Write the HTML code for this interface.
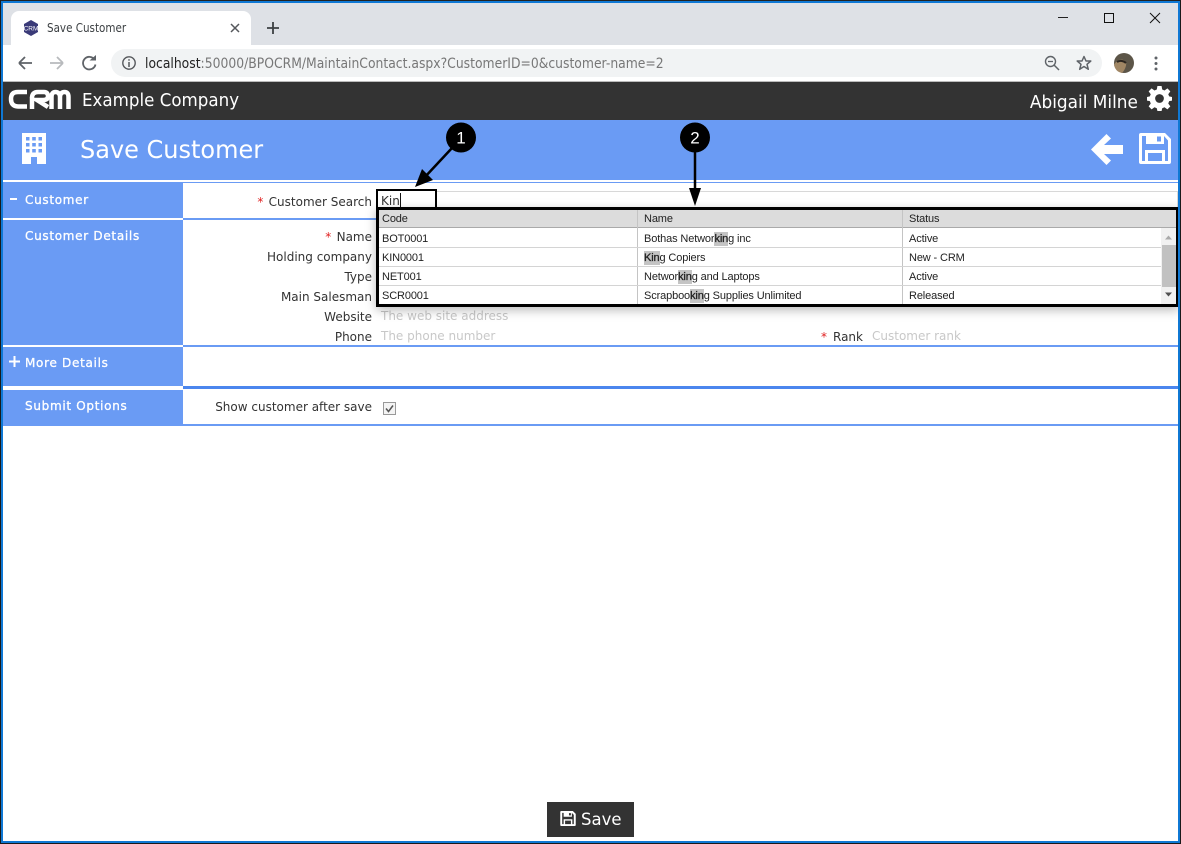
<!DOCTYPE html>
<html><head><meta charset="utf-8"><style>
html,body{margin:0;padding:0;background:#fff}
body{position:relative;width:1181px;height:844px;overflow:hidden;font-family:"DejaVu Sans",sans-serif;color:#333}
.a{position:absolute;white-space:nowrap}
.l{position:absolute;right:809px;font-size:12px;line-height:16px;white-space:nowrap;color:#333}
.s{color:#e02020;margin-right:1.5px}
.sec{position:absolute;left:25px;font-size:12px;font-weight:400;line-height:16px;color:#fff;white-space:nowrap;-webkit-text-stroke:.3px #fff;letter-spacing:.7px}
.ph{position:absolute;font-size:12px;line-height:16px;color:#c8c8c8;white-space:nowrap}
.c{position:absolute;font:11px/14px "Liberation Sans",sans-serif;color:#222;white-space:nowrap;letter-spacing:-.13px;margin-top:1px}
mark{background:#c4c4c4;color:#222;padding:1px 0;-webkit-text-stroke:.3px #222}
.rl{position:absolute;left:379px;width:782px;height:1px;background:#d4d4d4}
</style></head><body>
<!-- chrome -->
<div class="a" style="left:0;top:0;width:1181px;height:45px;background:#dee1e6"></div>
<div class="a" style="left:11px;top:11px;width:240px;height:34px;background:#fff;border-radius:8px 8px 0 0"></div>
<svg class="a" style="left:23px;top:20px" width="16" height="16" viewBox="0 0 16 16"><path d="M8 0L15 4V12L8 16L1 12V4Z" fill="#3a3a78"/><text x="8" y="10.500" font-size="6.500" font-family="Liberation Sans" fill="#fff" text-anchor="middle">CRM</text></svg>
<div class="a" style="left:47px;top:20px;font:12px/16px 'DejaVu Sans',sans-serif;color:#3c4043;transform-origin:0 50%;transform:scaleX(.864)">Save Customer</div>
<svg class="a" style="left:230px;top:23px" width="10" height="10" viewBox="0 0 10 10"><path d="M1 1L9 9M9 1L1 9" stroke="#55585c" stroke-width="1.500"/></svg>
<svg class="a" style="left:266px;top:21px" width="14" height="14" viewBox="0 0 14 14"><path d="M7 1V13M1 7H13" stroke="#3c4043" stroke-width="1.800"/></svg>
<svg class="a" style="left:1057px;top:12px" width="110" height="12" viewBox="0 0 110 12"><path d="M1 5.500H11" stroke="#222"/><rect x="47.500" y="1.500" width="9" height="9" fill="none" stroke="#111"/><path d="M93 1L103 11M103 1L93 11" stroke="#111"/></svg>
<div class="a" style="left:0;top:45px;width:1181px;height:36px;background:#fff"></div>
<svg class="a" style="left:17px;top:54px" width="90" height="18" viewBox="0 0 90 18" fill="none"><path d="M2 9H15M2 9L8 3M2 9L8 15" stroke="#5f6368" stroke-width="1.800"/><path d="M33 9H46M46 9L40 3M46 9L40 15" stroke="#b8babd" stroke-width="1.800"/><path d="M77.500 5.500A6.300 6.300 0 1 0 78.500 10.500" stroke="#5f6368" stroke-width="1.800"/><path d="M72.500 6.500H79V1Z" fill="#5f6368"/></svg>
<div class="a" style="left:111px;top:49px;width:991px;height:28px;border-radius:14px;background:#f1f3f4"></div>
<svg class="a" style="left:121px;top:55px" width="16" height="16" viewBox="0 0 16 16" fill="none"><circle cx="8" cy="8" r="6.200" stroke="#55585c" stroke-width="1.400"/><path d="M8 7V12" stroke="#55585c" stroke-width="1.500"/><path d="M8 4.200V5.700" stroke="#55585c" stroke-width="1.500"/></svg>
<div class="a" style="left:145px;top:56px;font:14px/17px 'DejaVu Sans',sans-serif;color:#777;transform-origin:0 50%;transform:scaleX(.884)"><span style="color:#222">localhost</span>:50000/BPOCRM/MaintainContact.aspx?CustomerID=0&amp;customer-name=2</div>
<svg class="a" style="left:1044px;top:55px" width="16" height="16" viewBox="0 0 16 16" fill="none"><circle cx="6.500" cy="6.500" r="5" stroke="#5f6368" stroke-width="1.400"/><path d="M10 10L15 15" stroke="#5f6368" stroke-width="1.500"/><path d="M4 6.500H9" stroke="#5f6368" stroke-width="1.300"/></svg>
<svg class="a" style="left:1076px;top:55px" width="16" height="16" viewBox="0 0 16 16" fill="none"><path d="M8 1.500L10 6H14.800L11 9.300L12.300 14.300L8 11.500L3.700 14.300L5 9.300L1.200 6H6Z" stroke="#5f6368" stroke-width="1.500" stroke-linejoin="round"/></svg>
<svg class="a" style="left:1114px;top:53px" width="20" height="20" viewBox="0 0 20 20"><circle cx="10" cy="10" r="10" fill="#5c5548"/><path d="M0 12C3 6 9 5 12 9C13 13 10 18 8 20C3 19 1 16 0 12Z" fill="#a08664"/><path d="M3 9C6 7 10 8 12 10" stroke="#2c2620" stroke-width="2" fill="none"/></svg>
<svg class="a" style="left:1154px;top:56px" width="4" height="15" viewBox="0 0 4 15" fill="#5f6368"><circle cx="2" cy="2" r="1.500"/><circle cx="2" cy="7.500" r="1.500"/><circle cx="2" cy="13" r="1.500"/></svg>
<!-- header -->
<div class="a" style="left:0;top:81px;width:1181px;height:1px;background:#bbb"></div>
<div class="a" style="left:0;top:82px;width:1181px;height:38px;background:#333"></div>
<svg class="a" style="left:8px;top:89px" width="63" height="21" viewBox="0 0 63 21" fill="none" stroke="#fff" stroke-width="4.500"><path d="M19 3H10C5 3 3 5.500 3 10S5 17.500 10 17.500H19"/><path d="M24 20V9C24 5 26 3 30 3H36C39 3 40 5 40 7C40 10 38 11 35 11H29L40 18"/><path d="M43.500 20V8C43.500 4.500 45 3 47.500 3S52 4.500 52 8V20M52 8C52 4.500 54 3 56.500 3S60.500 4.500 60.500 8V20"/></svg>
<div class="a" style="left:82px;top:90px;font:18px/22px 'DejaVu Sans',sans-serif;color:#fff;transform-origin:0 50%;transform:scaleX(.927)">Example Company</div>
<div class="a" style="right:43px;top:92px;font:18px/22px 'DejaVu Sans',sans-serif;color:#fff;transform-origin:100% 50%;transform:scaleX(.94)">Abigail Milne</div>
<svg class="a" style="left:1147px;top:86px" width="25" height="25" viewBox="0 0 24 24"><path fill="#fff" fill-rule="evenodd" d="M10 0H14L14.600 3.400L16.800 4.300L19.600 2.300L22.400 5.100L20.400 7.900L21.300 10L24 10.500V14L21.300 14.500L20.400 16.800L22.400 19.600L19.600 22.400L16.800 20.400L14.600 21.300L14 24H10L9.400 21.300L7.200 20.400L4.400 22.400L1.600 19.600L3.600 16.800L2.700 14.500L0 14V10.500L2.700 10L3.600 7.900L1.600 5.100L4.400 2.300L7.200 4.300L9.400 3.400ZM12 7.800A4.200 4.200 0 1 0 12 16.200A4.200 4.200 0 1 0 12 7.800Z"/></svg>
<div class="a" style="left:0;top:120px;width:1181px;height:60px;background:#6a9bf4"></div>
<svg class="a" style="left:22px;top:133px" width="24" height="31" viewBox="0 0 24 31"><path fill="#fff" fill-rule="evenodd" d="M0 0H24V31H15V24H9V31H0ZM4 4V7.500H7.500V4ZM10.200 4V7.500H13.800V4ZM16.500 4V7.500H20V4ZM4 10V13.500H7.500V10ZM10.200 10V13.500H13.800V10ZM16.500 10V13.500H20V10ZM4 16V19.500H7.500V16ZM10.200 16V19.500H13.800V16ZM16.500 16V19.500H20V16Z"/></svg>
<div class="a" style="left:80px;top:134px;font:25px/32px 'DejaVu Sans',sans-serif;color:#fff;transform-origin:0 50%;transform:scaleX(.96)">Save Customer</div>
<svg class="a" style="left:1091px;top:134px" width="33" height="31" viewBox="0 0 33 31"><path fill="#fff" d="M0 15.500L15.500 0L20 4.500L13 11H32V20H13L20 26.500L15.500 31Z"/></svg>
<svg class="a" style="left:1139px;top:133px" width="32" height="31" viewBox="0 0 32 31"><path fill="#fff" fill-rule="evenodd" d="M2 0H26L32 6V29Q32 31 30 31H2Q0 31 0 29V2Q0 0 2 0ZM3 3V28H6V17H26V28H29V7.500L25 3V11H7V3ZM9 20V28H23V20ZM18 3.500V8.500H22V3.500Z"/></svg>
<!-- body bands -->
<div class="a" style="left:0;top:180px;width:1181px;height:2px;background:#fff"></div>
<div class="a" style="left:0;top:182px;width:183px;height:244px;background:#6a9bf4"></div>
<div class="a" style="left:0;top:218px;width:183px;height:2px;background:#fff"></div>
<div class="a" style="left:0;top:345px;width:183px;height:2px;background:#fff"></div>
<div class="a" style="left:0;top:386px;width:183px;height:4px;background:#fff"></div>
<div class="a" style="left:183px;top:182px;width:998px;height:1px;background:#6a9bf4"></div>
<div class="a" style="left:183px;top:218px;width:998px;height:2px;background:#6a9bf4"></div>
<div class="a" style="left:183px;top:345px;width:998px;height:2px;background:#6a9bf4"></div>
<div class="a" style="left:183px;top:386px;width:998px;height:3px;background:#4b86ee"></div>
<div class="a" style="left:183px;top:424px;width:998px;height:2px;background:#6a9bf4"></div>
<div class="a" style="left:10px;top:198px;width:7px;height:2px;background:#fff"></div>
<div class="sec" style="top:192px">Customer</div>
<div class="sec" style="top:228px">Customer Details</div>
<svg class="a" style="left:9px;top:356px" width="11" height="11"><path d="M5.500 0V11M0 5.500H11" stroke="#fff" stroke-width="2"/></svg>
<div class="sec" style="top:355px">More Details</div>
<div class="sec" style="top:398px">Submit Options</div>
<!-- labels -->
<div class="l" style="top:194px"><span class="s">*</span> Customer Search</div>
<div class="l" style="top:229px"><span class="s">*</span> Name</div>
<div class="l" style="top:249px">Holding company</div>
<div class="l" style="top:269px">Type</div>
<div class="l" style="top:289px">Main Salesman</div>
<div class="l" style="top:309px">Website</div>
<div class="l" style="top:329px">Phone</div>
<div class="l" style="top:399px">Show customer after save</div>
<div class="ph" style="left:381px;top:308px">The web site address</div>
<div class="ph" style="left:381px;top:328px">The phone number</div>
<div class="a" style="left:821px;top:329px;font-size:12px;line-height:16px;color:#e02020">*</div>
<div class="a" style="left:833px;top:329px;font-size:12px;line-height:16px;color:#333">Rank</div>
<div class="ph" style="left:872px;top:328px">Customer rank</div>
<svg class="a" style="left:383px;top:402px" width="13" height="13" viewBox="0 0 13 13" fill="none"><rect x=".5" y=".5" width="12" height="12" fill="#f4f4f4" stroke="#999"/><path d="M3 6.500L5.500 9.500L10 3.500" stroke="#555" stroke-width="1.500"/></svg>
<!-- search input -->
<div class="a" style="left:436px;top:191px;width:741px;height:17px;border:1px solid #d8d8d8;border-left:0;box-sizing:content-box"></div>
<div class="a" style="left:376px;top:189px;width:61px;height:20px;border:2px solid #000;box-sizing:border-box"></div>
<div class="a" style="left:381px;top:193px;font-size:12px;line-height:16px;color:#333">Kin</div>
<div class="a" style="left:400px;top:193px;width:1px;height:15px;background:#111"></div>
<!-- popup -->
<div class="a" style="left:376px;top:207px;width:803px;height:100px;border:3px solid #000;box-sizing:border-box;background:#fff;box-shadow:0 3px 10px rgba(0,0,0,.28)"></div>
<div class="a" style="left:379px;top:210px;width:797px;height:17px;background:#dcdcdc"></div>
<div class="a" style="left:379px;top:227px;width:797px;height:1px;background:#aaa"></div>
<div class="a" style="left:637px;top:210px;width:1px;height:94px;background:#c4c4c4"></div>
<div class="a" style="left:902px;top:210px;width:1px;height:94px;background:#c4c4c4"></div>
<div class="rl" style="top:247px"></div><div class="rl" style="top:266px"></div><div class="rl" style="top:285px"></div>
<div class="c" style="left:382px;top:211px">Code</div><div class="c" style="left:644px;top:211px">Name</div><div class="c" style="left:909px;top:211px">Status</div>
<div class="c" style="left:382px;top:231px">BOT0001</div><div class="c" style="left:644px;top:231px">Bothas Networ<mark>kin</mark>g inc</div><div class="c" style="left:909px;top:231px">Active</div>
<div class="c" style="left:382px;top:250px">KIN0001</div><div class="c" style="left:644px;top:250px"><mark>Kin</mark>g Copiers</div><div class="c" style="left:909px;top:250px">New - CRM</div>
<div class="c" style="left:382px;top:269px">NET001</div><div class="c" style="left:644px;top:269px">Networ<mark>kin</mark>g and Laptops</div><div class="c" style="left:909px;top:269px">Active</div>
<div class="c" style="left:382px;top:288px">SCR0001</div><div class="c" style="left:644px;top:288px">Scrapboo<mark>kin</mark>g Supplies Unlimited</div><div class="c" style="left:909px;top:288px">Released</div>
<div class="a" style="left:1161px;top:228px;width:15px;height:76px;background:#f1f1f1"></div>
<div class="a" style="left:1162px;top:245px;width:14px;height:42px;background:#c1c1c1"></div>
<svg class="a" style="left:1161px;top:228px" width="15" height="76"><path d="M4 11.500L7.500 7.500L11 11.500Z" fill="#aaa"/><path d="M4 64.500L7.500 68.500L11 64.500Z" fill="#505050"/></svg>
<!-- annotations -->
<svg class="a" style="left:400px;top:120px" width="320" height="90" viewBox="0 0 320 90"><circle cx="61" cy="17.500" r="15" fill="#000"/><circle cx="295" cy="17.500" r="15" fill="#000"/><path d="M52 28L24 58" stroke="#000" stroke-width="2.500"/><path d="M15 67L22 49L33 60Z" fill="#000"/><path d="M295 32V70" stroke="#000" stroke-width="2.500"/><path d="M295 86L289 68H301Z" fill="#000"/><text x="61" y="23.500" font-size="17" fill="#fff" text-anchor="middle" font-family="Liberation Sans">1</text><text x="295" y="23.500" font-size="17" fill="#fff" text-anchor="middle" font-family="Liberation Sans">2</text></svg>
<!-- save button -->
<div class="a" style="left:547px;top:802px;width:87px;height:35px;background:#333"></div>
<svg class="a" style="left:560px;top:811px" width="16" height="15" viewBox="0 0 32 31"><path fill="#fff" fill-rule="evenodd" d="M2 0H26L32 6V29Q32 31 30 31H2Q0 31 0 29V2Q0 0 2 0ZM4 4V27H7V17H25V27H28V8L24 4V12H7V4ZM10 20V27H22V20ZM18 4.500V9H22V4.500Z"/></svg>
<div class="a" style="left:581px;top:810px;font:17px/20px 'DejaVu Sans',sans-serif;color:#fff;transform-origin:0 50%;transform:scaleX(.97)">Save</div>
<!-- window frame -->
<div class="a" style="left:0;top:0;width:1181px;height:844px;box-sizing:border-box;border:2px solid #1a1a1a;border-top-color:#222"></div>
<div class="a" style="left:1px;top:1px;width:1179px;height:842px;box-sizing:border-box;border:2px solid #0f78d4"></div>
</body></html>
